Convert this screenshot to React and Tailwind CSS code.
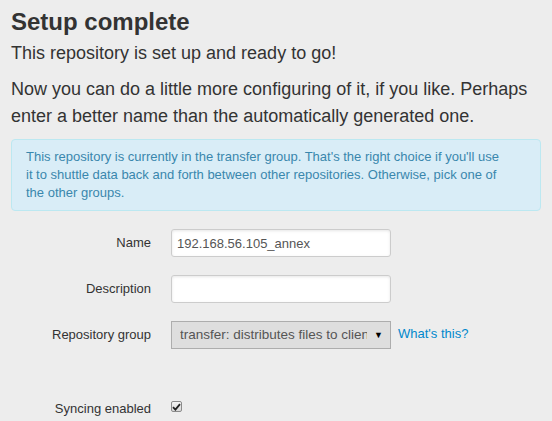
export default function App() {
  return (
    <div className="min-h-[421px] bg-[#ededed] px-[11px] pt-[4px] font-['Liberation_Sans',Arial,sans-serif] text-[13px] leading-[18px] text-[#333]">
      <h2 className="text-[24px] font-bold leading-[36px]">Setup complete</h2>
      <p className="mb-[9px] text-[18px] leading-[27px]">This repository is set up and ready to go!</p>
      <p className="mb-[9px] text-[18px] leading-[27px]">
        Now you can do a little more configuring of it, if you like. Perhaps enter a better name than the
        automatically generated one.
      </p>

      <div className="mb-[18px] rounded-[4px] border border-[#bce8f1] bg-[#d9edf7] py-[8px] pl-[14px] pr-[35px] text-[#3a87ad]">
        This repository is currently in the transfer group. That's the right choice if you'll use it to shuttle
        data back and forth between other repositories. Otherwise, pick one of the other groups.
      </div>

      <FormRow label="Name">
        <TextInput value="192.168.56.105_annex" />
      </FormRow>

      <FormRow label="Description">
        <TextInput value="" />
      </FormRow>

      <FormRow label="Repository group">
        <div className="flex items-center">
          <div className="flex h-[28px] w-[220px] items-center overflow-hidden border border-[#adadad] bg-[#dedede] pl-[8px] pr-[7px] text-[13.5px] text-[#555]">
            <span className="w-[187px] overflow-hidden whitespace-nowrap">transfer: distributes files to clients</span>
            <span className="ml-auto text-[9px] leading-none text-black">▼</span>
          </div>
          <a href="#" className="-mt-[3px] pl-[7px] text-[#0088cc]">What's this?</a>
        </div>
      </FormRow>

      <div className="h-[28px]" />

      <div className="flex">
        <label className="w-[140px] shrink-0 pt-[5px] text-right">Syncing enabled</label>
        <div className="ml-[20px] pt-[6px]">
          <span className="flex h-[11px] w-[11px] items-center justify-center rounded-[2px] border border-[#8a8a8a] bg-gradient-to-b from-[#f4f4f4] to-[#d8d8d8]">
            <svg width="9" height="8" viewBox="0 0 9 8">
              <path d="M1 4.2 L3.4 6.6 L8 1.2" fill="none" stroke="#222" strokeWidth="1.8" />
            </svg>
          </span>
        </div>
      </div>
    </div>
  );
}

function FormRow({ label, children }) {
  return (
    <div className="mb-[18px] flex">
      <label className="w-[140px] shrink-0 pt-[5px] text-right">{label}</label>
      <div className="ml-[20px]">{children}</div>
    </div>
  );
}

function TextInput({ value }) {
  return (
    <input
      readOnly
      value={value}
      className="block h-[28px] w-[220px] rounded-[3px] border border-[#ccc] bg-white px-[5px] text-[13px] leading-[18px] text-[#555] shadow-[inset_0_1px_3px_rgba(0,0,0,0.1)] outline-none"
    />
  );
}
